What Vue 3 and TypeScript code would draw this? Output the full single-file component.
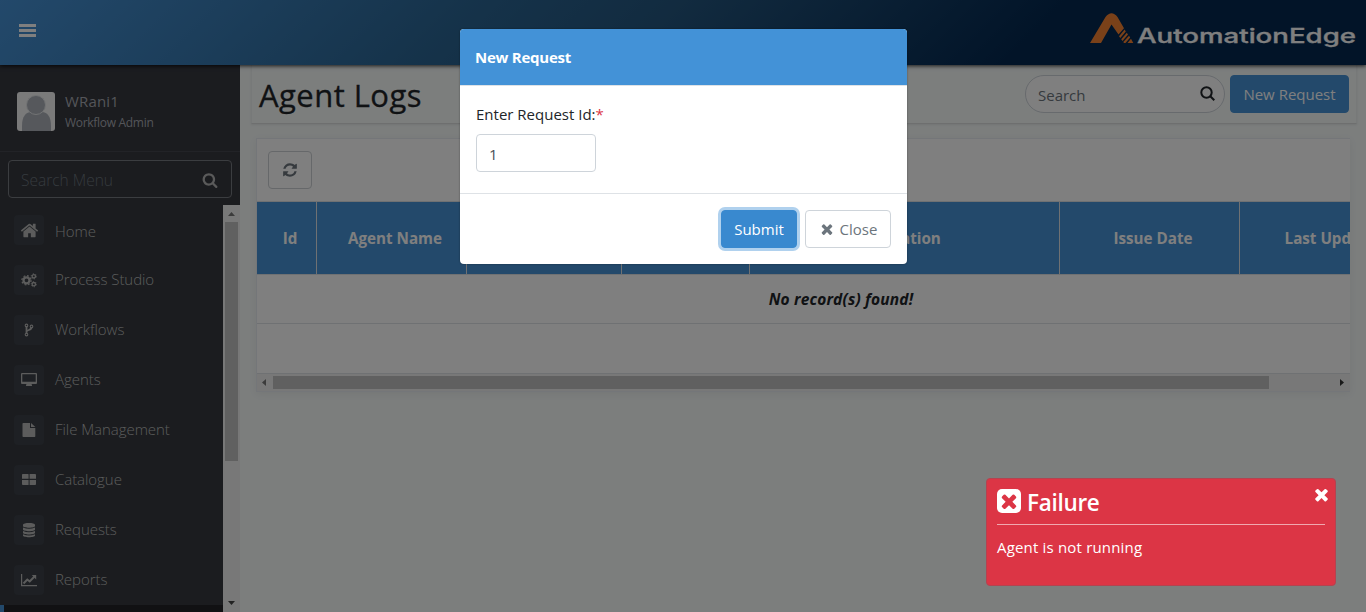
<script setup lang="ts">
import { ref } from 'vue'

interface MenuItem { label: string; icon: string }
interface Column { label: string; width: number }

const menu: MenuItem[] = [
  { label: 'Home', icon: 'home' },
  { label: 'Process Studio', icon: 'cogs' },
  { label: 'Workflows', icon: 'fork' },
  { label: 'Agents', icon: 'desktop' },
  { label: 'File Management', icon: 'file' },
  { label: 'Catalogue', icon: 'grid' },
  { label: 'Requests', icon: 'database' },
  { label: 'Reports', icon: 'chart' },
]

const columns: Column[] = [
  { label: 'Id', width: 60 },
  { label: 'Agent Name', width: 150 },
  { label: '', width: 155 },
  { label: '', width: 128 },
  { label: 'Location', width: 310 },
  { label: 'Issue Date', width: 180 },
  { label: 'Last Updated', width: 184 },
]

const requestId = ref('1')

const searchPath = 'M1216 832q0-185-131.5-316.5t-316.5-131.5-316.5 131.5-131.5 316.5 131.5 316.5 316.5 131.5 316.5-131.5 131.5-316.5zm512 832q0 52-38 90t-90 38q-54 0-90-38l-343-342q-179 124-399 124-143 0-273.5-55.5t-225-150-150-225-55.5-273.5 55.5-273.5 150-225 225-150 273.5-55.5 273.5 55.5 225 150 150 225 55.5 273.5q0 220-124 399l343 343q37 37 37 90z'
const timesPath = 'M1490 1322q0 40-28 68l-136 136q-28 28-68 28t-68-28l-294-294-294 294q-28 28-68 28t-68-28l-136-136q-28-28-28-68t28-68l294-294-294-294q-28-28-28-68t28-68l136-136q28-28 68-28t68 28l294 294 294-294q28-28 68-28t68 28l136 136q28 28 28 68t-28 68l-294 294 294 294q28 28 28 68z'
const refreshPath = 'M1639 1056q0 5-1 7-64 268-268 434.5t-478 166.5q-146 0-282.5-55t-243.5-157l-129 129q-19 19-45 19t-45-19-19-45v-448q0-26 19-45t45-19h448q26 0 45 19t19 45-19 45l-137 137q71 66 161 102t187 36q134 0 250-65t186-179q11-17 53-117 8-23 30-23h192q13 0 22.5 9.5t9.5 22.5zm25-800v448q0 26-19 45t-45 19h-448q-26 0-45-19t-19-45 19-45l138-138q-148-137-349-137-134 0-250 65t-186 179q-11 17-53 117-8 23-30 23h-199q-13 0-22.5-9.5t-9.5-22.5v-7q65-268 270-434.5t480-166.5q146 0 284 55.5t245 156.5l130-129q19-19 45-19t45 19 19 45z'
const homePath = 'M1472 992v480q0 26-19 45t-45 19h-384v-384h-256v384h-384q-26 0-45-19t-19-45v-480q0-1 .5-3t.5-3l575-474 575 474q1 2 1 6zm223-69l-62 74q-8 9-21 11h-3q-13 0-21-7l-692-577-692 577q-12 8-24 7-13-2-21-11l-62-74q-8-10-7-23.5t11-21.5l719-599q32-26 76-26t76 26l244 204v-195q0-14 9-23t23-9h192q14 0 23 9t9 23v408l219 182q10 8 11 21.5t-7 23.5z'
</script>

<template>
  <div class="app">
    <header class="topbar">
      <svg class="bars" width="17" height="14" viewBox="0 0 17 14"><path d="M0 0h17v3H0zM0 5h17v3H0zM0 10h17v3H0z" /></svg>
      <svg class="logo" width="268" height="40" viewBox="0 0 268 40">
        <path fill="#f58232" d="M0 31 15.500 5Q21.500-2.500 27.500 5L34 16.300 28.500 22.500 21.500 12.500 11 31Z" />
        <path fill="#f58232" d="M29 24.200 34.600 17.600 35.800 19.400 30.300 26ZM31.200 27.200 36.800 20.700 38 22.500 32.500 29ZM33.300 30 39 23.800 40.200 25.600 35.500 31H34ZM37.500 31 41 26.800 43.300 31Z" />
        <text x="47" y="31" textLength="219" lengthAdjust="spacingAndGlyphs">AutomationEdge</text>
      </svg>
    </header>

    <div class="body">
      <aside class="sidebar">
        <div class="user">
          <svg class="avatar" width="38" height="39" viewBox="0 0 38 39">
            <rect width="38" height="39" rx="3" fill="#f4f4f4" />
            <path d="M5 39V34C5 25 8.500 20 14 20H25C30.500 20 34 25 34 34V39Z" fill="#acb1b9" />
            <circle cx="19" cy="13" r="9.500" fill="#acb1b9" stroke="#e4e6e8" stroke-width="1" />
          </svg>
          <div class="who">
            <div class="name">WRani1</div>
            <div class="role">Workflow Admin</div>
          </div>
        </div>
        <div class="menu-search">
          <span>Search Menu</span>
          <svg width="16" height="16" viewBox="0 0 1792 1792"><path :d="searchPath" /></svg>
        </div>
        <div class="menu-wrap">
          <nav class="menu">
            <a v-for="item in menu" :key="item.label" class="item">
              <span class="tile">
                <svg v-if="item.icon === 'home'" width="19" height="19" viewBox="0 0 1792 1792"><path :d="homePath" /></svg>
                <svg v-else width="16" height="16" viewBox="0 0 16 16">
                  <template v-if="item.icon === 'cogs'">
                    <circle class="ring" cx="5.500" cy="8.300" r="3" stroke-width="2.300" />
                    <circle class="ring" cx="5.500" cy="8.300" r="4.600" stroke-width="1.300" stroke-dasharray="1.800 1.813" />
                    <g v-for="cy in [4.3, 12.2]" :key="cy">
                      <circle class="ring" cx="12.800" :cy="cy" r="1.700" stroke-width="1.300" />
                      <circle class="ring" cx="12.800" :cy="cy" r="2.600" stroke-width=".9" stroke-dasharray="1.200 1.522" />
                    </g>
                  </template>
                  <template v-else-if="item.icon === 'fork'">
                    <path class="line" d="M5.500 4v8M10.500 5.500c0 3-5 2-5 4.500" stroke-width="1.800" />
                    <circle class="ring" cx="5.500" cy="3.400" r="1.300" stroke-width="1.100" />
                    <circle class="ring" cx="5.500" cy="12.600" r="1.300" stroke-width="1.100" />
                    <circle class="ring" cx="10.500" cy="4.400" r="1.300" stroke-width="1.100" />
                  </template>
                  <path v-else-if="item.icon === 'desktop'" fill-rule="evenodd" d="M1 1h14q1 0 1 1v9q0 1-1 1h-4.500l.5 1.200v.8H5v-.8l.5-1.200H1q-1 0-1-1V2q0-1 1-1ZM1.300 2.300v7.400h13.400V2.300Z" />
                  <path v-else-if="item.icon === 'file'" d="M2.200 1h6.800v5h5.300v8.300q0 .7-.7.7H2.200q-.7 0-.7-.7V1.700q0-.7.7-.7ZM10 1l4.300 4H10Z" />
                  <path v-else-if="item.icon === 'grid'" d="M2 2h5q.6 0 .6.6v4.200H1V2.600Q1 2 2 2ZM8.600 2h5.400q1 0 1 .8v4H8.600ZM1 8h6.600v5H2q-1 0-1-.8ZM8.600 8H15v4.200q0 .8-1 .8H8.600Z" />
                  <path v-else-if="item.icon === 'database'" d="M2 2.800C2 .3 14 .3 14 2.800V4C14 6.300 2 6.300 2 4ZM2 5.600q6 2.400 12 0v1.800c0 2.300-12 2.300-12 0ZM2 9q6 2.400 12 0v1.800c0 2.300-12 2.300-12 0ZM2 12.300q6 2.400 12 0v1.200c0 2.300-12 2.300-12 0Z" />
                  <template v-else>
                    <path d="M0 2h1.200v11H16v1.200H0Z" />
                    <path class="line" d="M2.500 11.500 6.300 7.500 8.700 9.500 13.500 4.500" stroke-width="2" />
                    <path d="M10.800 3h4.400v4.400Z" />
                  </template>
                </svg>
              </span>
              <span class="item-label">{{ item.label }}</span>
            </a>
            <div class="next-item"></div>
          </nav>
          <div class="vscroll">
            <svg width="17" height="17" viewBox="0 0 17 17"><path d="M5 11h7L8.500 7z" fill="#777" /></svg>
            <div class="vthumb"></div>
            <svg class="down" width="17" height="17" viewBox="0 0 17 17"><path d="M5 6h7L8.500 10z" fill="#444" /></svg>
          </div>
        </div>
      </aside>

      <main class="main">
        <section class="page-head">
          <h1>Agent Logs</h1>
          <div class="search">
            <span>Search</span>
            <svg width="16" height="16" viewBox="0 0 16 16"><circle cx="6.500" cy="6.500" r="5.200" /><path d="m10.300 10.300 4 4" /></svg>
          </div>
          <button class="primary new">New Request</button>
        </section>

        <section class="panel">
          <div class="toolbar">
            <button class="refresh"><svg width="16" height="16" viewBox="0 0 1792 1792"><path :d="refreshPath" /></svg></button>
          </div>
          <div class="table">
            <div class="row head">
              <div v-for="(c, i) in columns" :key="i" class="cell" :style="{ width: c.width + 'px' }">{{ c.label }}</div>
            </div>
            <div class="row empty">No record(s) found!</div>
            <div class="row blank"></div>
          </div>
          <div class="hscroll">
            <svg width="17" height="17" viewBox="0 0 17 17"><path d="M9 5v7L5 8.500z" fill="#777" /></svg>
            <div class="hthumb"></div>
            <svg class="right" width="17" height="17" viewBox="0 0 17 17"><path d="M7 5v7l4-3.500z" fill="#333" /></svg>
          </div>
        </section>
      </main>
    </div>

    <div class="backdrop"></div>

    <div class="modal">
      <div class="modal-head">New Request</div>
      <div class="modal-body">
        <label>Enter Request Id:<i>*</i></label>
        <input v-model="requestId" type="text" />
      </div>
      <div class="modal-foot">
        <button class="primary submit">Submit</button>
        <button class="close"><svg width="16" height="16" viewBox="0 0 1792 1792"><path :d="timesPath" /></svg><span>Close</span></button>
      </div>
    </div>

    <div class="toast">
      <div class="toast-title">
        <span class="badge"><svg width="22" height="22" viewBox="0 0 1792 1792"><path :d="timesPath" /></svg></span>
        <span>Failure</span>
      </div>
      <div class="toast-text">Agent is not running</div>
      <svg class="dismiss" width="19" height="19" viewBox="0 0 1792 1792"><path :d="timesPath" /></svg>
    </div>
  </div>
</template>

<style>
body { margin: 0; overflow: hidden; }
</style>

<style scoped>
* { box-sizing: border-box; }
.app { position: relative; width: 1366px; height: 612px; overflow: hidden; display: flex; flex-direction: column; background: #f8fcfb; font: 15px/24px "Open Sans", "Noto Sans", sans-serif; color: #212529; }
button { font: inherit; padding: 0; border-radius: 4px; }
svg { display: block; flex: none; }

.topbar { position: relative; z-index: 2; flex: none; height: 65px; display: flex; justify-content: space-between; padding: 0 10px 0 19px; background: linear-gradient(135deg, #4692d6 0%, #2b6695 33%, #24567f 48%, #042850 75%); box-shadow: 0 1px 4px rgba(0, 0, 0, .8); }
.bars { margin-top: 24px; fill: #fff; }
.logo { margin: 12px -2px 0 0; overflow: visible; }
.logo text { font: 500 20px Inter, sans-serif; fill: #fff; stroke: #fff; stroke-width: .3; }

.body { flex: 1; display: flex; min-height: 0; }
.sidebar { width: 240px; flex: none; display: flex; flex-direction: column; background: #36383f; color: #a8abb2; }
.user { flex: none; height: 87px; padding: 26px 0 0 17px; display: flex; gap: 10px; border-bottom: 1px solid #44474e; }
.avatar { margin-top: 1px; }
.name { line-height: 20px; letter-spacing: .15px; }
.role { font-size: 12px; line-height: 20px; margin-top: 2px; letter-spacing: -.3px; }
.menu-search { flex: none; height: 38px; margin: 8px 8px 7px; padding: 2px 13px 0 12px; border: 1px solid #777a80; border-radius: 4px; display: flex; align-items: center; justify-content: space-between; color: #6c757d; }
.menu-search span { font-weight: 300; font-size: 15.5px; }
.menu-search svg { fill: #b4b4b4; }
.menu-wrap { flex: 1; display: flex; min-height: 0; }
.menu { flex: 1; overflow: hidden; }
.item { display: flex; align-items: center; gap: 11px; height: 50px; padding-left: 14px; color: #b8b8b8; font-weight: 300; }
.item-label { margin-top: -2px; letter-spacing: -.05px; }
.item:first-child .item-label { margin-top: 1px; }
.tile { width: 30px; height: 30px; border-radius: 4px; background: #3c4148; display: flex; align-items: center; justify-content: center; }
.tile svg { fill: #b8b8b8; }
.ring, .line { fill: none; stroke: #b8b8b8; }
.next-item { height: 50px; background: #222327; border-left: 4px solid #4692d6; }
.vscroll { width: 17px; display: flex; flex-direction: column; background: #f1f1f1; }
.vthumb { width: 13px; height: 239px; margin-left: 2px; background: #c1c1c1; }
.down { margin-top: auto; }

.main { flex: 1; min-width: 0; padding: 0 9px 0 11px; }
.page-head { height: 59px; display: flex; padding: 10px 7px 0; border-bottom: 1px solid #dcdfdf; border-left: 1px solid #eef2f2; border-right: 1px solid #eef2f2; box-shadow: 0 1px 2px rgba(0, 0, 0, .08); }
h1 { margin: 0; flex: 1; font-size: 31px; font-weight: 500; line-height: 41px; letter-spacing: .45px; -webkit-text-stroke: .3px #212529; }
.search { width: 200px; height: 38px; margin-right: 5px; padding: 2px 8px 0 12px; display: flex; justify-content: space-between; align-items: center; background: #fff; border: 1px solid #ced4da; border-radius: 19px; color: #6c757d; }
.search svg { margin-top: -2px; fill: none; stroke: #212529; stroke-width: 2; }
.primary { height: 38px; background: #4692d6; color: #fff; border: 1px solid #4692d6; }
.new { width: 119px; }
.panel { width: 1094px; margin: 14px 0 0 5px; background: #fff; border: 1px solid #e8edf2; border-right: 0; box-shadow: 0 2px 8px rgba(0, 0, 0, .06); }
.toolbar { height: 62px; padding: 12px 11px; }
.refresh { width: 44px; height: 38px; display: flex; align-items: center; justify-content: center; background: #fff; border: 1px solid #ccd0d4; }
.refresh svg { fill: #6c757d; }
.table { overflow: hidden; border-top: 1px solid #dee2e6; }
.row { width: 1170px; border-bottom: 1px solid #dee2e6; }
.head { display: flex; height: 73px; background: #4692d6; color: #fff; font-weight: 700; font-size: 15.2px; text-align: center; line-height: 72px; }
.cell { flex: none; padding-left: 7px; border-right: 1px solid #dee2e6; }
.empty { height: 49px; padding-right: 2px; line-height: 48px; text-align: center; font-weight: 700; font-style: italic; font-size: 15.5px; letter-spacing: .18px; }
.blank { height: 50px; }
.hscroll { display: flex; height: 17px; background: #f1f1f1; }
.hthumb { width: 996px; height: 13px; margin-top: 2px; margin-left: -1px; background: #c1c1c1; }
.right { margin-left: auto; }

.backdrop { position: absolute; inset: 0; z-index: 5; background: rgba(0, 0, 0, .5); }

.modal { position: absolute; z-index: 6; left: 460px; top: 29px; width: 447px; height: 235px; background: #fff; border-radius: 4px; overflow: hidden; box-shadow: 0 0 2px rgba(0, 0, 0, .4); }
.modal-head { height: 57px; padding: 0 15px; line-height: 56px; font-weight: 700; letter-spacing: -.25px; color: #fff; background: #4392d7; border-bottom: 1px solid #dee2e6; }
.modal-body { height: 107px; padding: 16px 16px 0; }
label { display: block; }
label i { color: #dc3545; font-style: normal; }
input { display: block; width: 120px; height: 38px; margin-top: 8px; padding: 1px 12px 0; border: 1px solid #ced4da; border-radius: 4px; font: inherit; color: #495057; background: #fff; }
.modal-foot { height: 71px; border-top: 1px solid #dee2e6; padding: 16px 16px 0; display: flex; justify-content: flex-end; gap: 8px; }
.submit { width: 76px; background: #3989cf; border-color: #3989cf; box-shadow: 0 0 0 3px #b0d1ee; }
.close { width: 86px; height: 38px; display: flex; align-items: center; justify-content: center; gap: 5px; border: 1px solid #ced4da; background: #fff; color: #6c757d; }
.close svg { fill: #6c757d; }

.toast { position: absolute; z-index: 7; left: 986px; top: 478px; width: 350px; height: 108px; padding: 3px 10px; background: #dc3545; border: 1px solid #b34350; border-radius: 4px; color: #fff; }
.toast-title { height: 43px; display: flex; align-items: center; gap: 6px; padding-bottom: 1px; border-bottom: 1px solid #f0a8af; font-size: 22.5px; font-weight: 600; letter-spacing: -.3px; }
.badge { width: 24px; height: 24px; margin-top: -3px; display: flex; align-items: center; justify-content: center; background: #fff; border-radius: 5px; }
.badge svg { fill: #dc3545; }
.toast-text { margin-top: 10px; letter-spacing: .18px; }
.dismiss { position: absolute; top: 6px; right: 4px; fill: #fff; }
</style>
